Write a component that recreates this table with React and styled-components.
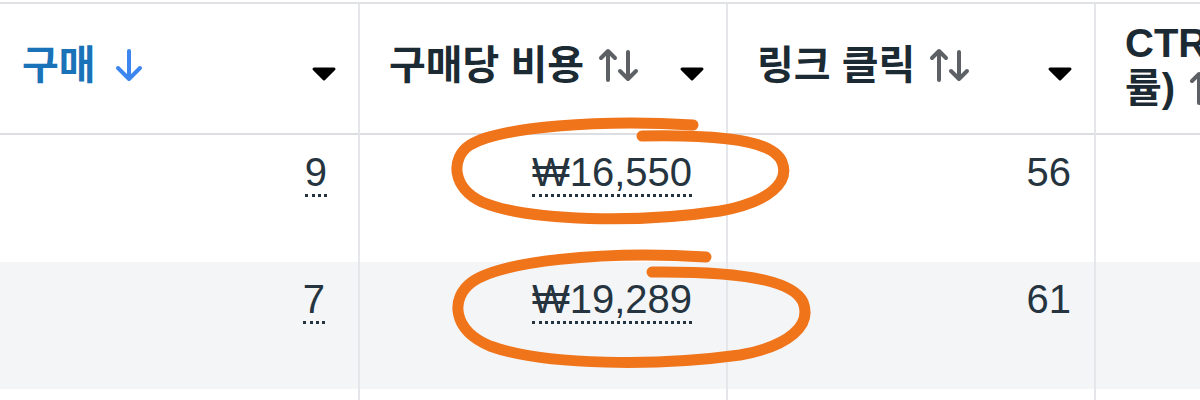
import React from 'react';
import styled, { createGlobalStyle } from 'styled-components';

const GlobalStyle = createGlobalStyle`
    html, body {
        margin: 0;
        padding: 0;
        background: #ffffff;
        overflow: hidden;
    }
    body {
        font-family: "Liberation Sans", "Noto Sans CJK KR", sans-serif;
        color: #1c2b33;
    }
`;

const Page = styled.div`
    position: relative;
    width: 1200px;
    height: 400px;
    overflow: hidden;
    padding-top: 2px;
    box-sizing: border-box;
`;

const Table = styled.div`
    display: grid;
    grid-template-columns: 367px 368px 368px 368px;
    margin-left: -7px;
    border-top: 2px solid #e0e2e5;
`;

const HeadCell = styled.div`
    height: 131px;
    box-sizing: border-box;
    display: flex;
    align-items: center;
    gap: 16px;
    padding: 0 21px 6px 29px;
    border-right: 2px solid #e4e6e9;
    border-bottom: 2px solid #dcdee1;
    background: #ffffff;
`;

const Label = styled.div`
    flex: 1;
    min-width: 0;
    font-size: 40px;
    font-weight: 700;
    line-height: 45px;
    color: ${(p) => (p.$active ? '#1a72b8' : '#1c2b33')};
`;

const SortIcon = styled.svg`
    display: inline-block;
    vertical-align: -4px;
    margin-left: ${(p) => p.$gap || 14}px;
`;

const Caret = styled.svg`
    flex: none;
    margin-top: 16px;
`;

const Cell = styled.div`
    height: 127px;
    box-sizing: border-box;
    padding: 13px ${(p) => p.$pr || 23}px 0 0;
    text-align: right;
    font-size: 40px;
    line-height: 48px;
    color: #25343e;
    border-right: 2px solid #e4e6e9;
    background: ${(p) => (p.$shade ? '#f4f5f7' : '#ffffff')};
`;

const Dotted = styled.span`
    border-bottom: 3px dotted #24333d;
`;

const Marks = styled.svg`
    position: absolute;
    top: 0;
    left: 0;
    pointer-events: none;
`;

const ArrowDown = () => (
    <SortIcon $gap={18} width="30" height="34" viewBox="0 0 30 34">
        <path d="M15 2 V30 M4 19 L15 30 L26 19" fill="none" stroke="#3d86f0" strokeWidth="4" strokeLinecap="round" strokeLinejoin="round" />
    </SortIcon>
);

const ArrowsUpDown = () => (
    <SortIcon width="42" height="36" viewBox="0 0 42 36">
        <g fill="none" stroke="#5d6166" strokeWidth="4" strokeLinecap="round" strokeLinejoin="round">
            <path d="M10 33 V4 M3 11 L10 4 L17 11" />
            <path d="M30 5 V32 M22 24 L30 32 L38 24" />
        </g>
    </SortIcon>
);

const DropCaret = () => (
    <Caret width="26" height="16" viewBox="0 0 26 16">
        <path d="M3 3 H23 L13 13 Z" fill="#000" stroke="#000" strokeWidth="3" strokeLinejoin="round" />
    </Caret>
);

const columns = [
    { label: '구매', active: true },
    { label: '구매당 비용' },
    { label: '링크 클릭' },
    { label: 'CTR(링크 클릭률)' },
];

const rows = [
    [{ v: '9', dot: true, pr: 31 }, { v: '₩16,550', dot: true, pr: 34 }, { v: '56' }, { v: '' }],
    [{ v: '7', dot: true, pr: 33 }, { v: '₩19,289', dot: true, pr: 34 }, { v: '61' }, { v: '' }],
    [{ v: '' }, { v: '' }, { v: '' }, { v: '' }],
];

const App = () => {
    return (
        <Page>
            <GlobalStyle />
            <Table>
                {columns.map((c) => (
                    <HeadCell key={c.label}>
                        <Label $active={c.active}>
                            {c.label}
                            {c.active ? <ArrowDown /> : <ArrowsUpDown />}
                        </Label>
                        <DropCaret />
                    </HeadCell>
                ))}
                {rows.map((r, i) =>
                    r.map((cell, j) => (
                        <Cell key={i + '-' + j} $shade={i === 1} $pr={cell.pr}>
                            {cell.dot ? <Dotted>{cell.v}</Dotted> : cell.v}
                        </Cell>
                    ))
                )}
            </Table>
            <Marks width="1200" height="400" viewBox="0 0 1200 400">
                <g fill="none" stroke="#f0741a" strokeWidth="11" strokeLinecap="round" strokeLinejoin="round">
                    <path d="M693 125 C600 119 500 127 470 145 C450 158 452 188 482 202 C530 222 640 223 720 211 C770 202 790 182 782 162 C775 145 742 134 642 136" />
                    <path d="M706 257 C600 250 500 262 472 282 C450 298 452 330 490 346 C545 366 660 366 740 355 C790 346 812 325 803 302 C795 285 760 271 652 272" />
                </g>
            </Marks>
        </Page>
    );
};

export default App;
